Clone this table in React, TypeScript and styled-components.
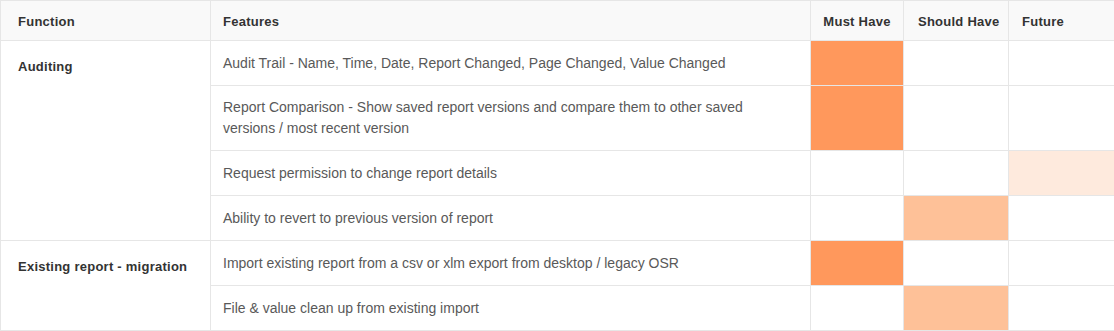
import { FC } from "react"
import styled, { createGlobalStyle } from "styled-components"

type Priority = "must" | "should" | "future"

interface Feature {
  text: string
  priority: Priority
  tall?: boolean
}

interface Group {
  name: string
  features: Feature[]
}

const groups: Group[] = [
  {
    name: "Auditing",
    features: [
      { text: "Audit Trail - Name, Time, Date, Report Changed, Page Changed, Value Changed", priority: "must" },
      {
        text: "Report Comparison - Show saved report versions and compare them to other saved versions / most recent version",
        priority: "must",
        tall: true,
      },
      { text: "Request permission to change report details", priority: "future" },
      { text: "Ability to revert to previous version of report", priority: "should" },
    ],
  },
  {
    name: "Existing report - migration",
    features: [
      { text: "Import existing report from a csv or xlm export from desktop / legacy OSR", priority: "must" },
      { text: "File & value clean up from existing import", priority: "should" },
    ],
  },
]

const priorities: Priority[] = ["must", "should", "future"]

const fills: Record<Priority, string> = {
  must: "#ff985c",
  should: "#fec198",
  future: "#feeadd",
}

const GlobalStyle = createGlobalStyle`
  body {
    margin: 0;
    background: #ffffff;
    font-family: "Liberation Sans", Arial, sans-serif;
  }
`

const Table = styled.table`
  width: 1114px;
  border-collapse: collapse;
  table-layout: fixed;
  font-size: 14px;
  line-height: 21px;
  color: #595959;
`

const HeadCell = styled.th<{ $w: number; $pl: number; $center?: boolean }>`
  width: ${props => props.$w}px;
  height: 40px;
  box-sizing: border-box;
  padding: 1px 0 0 ${props => props.$pl}px;
  text-align: ${props => (props.$center ? "center" : "left")};
  background: #f9f9f9;
  border: 1px solid #e6e6e6;
  font-size: 13px;
  letter-spacing: 0.25px;
  font-weight: 700;
  color: #333333;
`

const Row = styled.tr<{ $tall?: boolean }>`
  height: ${props => (props.$tall ? 65 : 45)}px;
`

const GroupCell = styled.td`
  vertical-align: top;
  padding: 15px 10px 0 17px;
  border: 1px solid #e6e6e6;
  font-size: 13px;
  letter-spacing: 0.25px;
  font-weight: 700;
  color: #333333;
`

const FeatureCell = styled.td`
  padding: 11px 20px 11px 12px;
  border: 1px solid #e6e6e6;
`

const MarkCell = styled.td<{ $fill?: string }>`
  padding: 0;
  border: 1px solid #e6e6e6;
  background: ${props => props.$fill ?? "#ffffff"};
`

const App: FC = () => {
  return (
    <>
      <GlobalStyle />
      <Table>
        <thead>
          <tr>
            <HeadCell $w={210} $pl={17}>Function</HeadCell>
            <HeadCell $w={600} $pl={12}>Features</HeadCell>
            <HeadCell $w={93} $pl={0} $center>Must Have</HeadCell>
            <HeadCell $w={105} $pl={14}>Should Have</HeadCell>
            <HeadCell $w={106} $pl={13}>Future</HeadCell>
          </tr>
        </thead>
        <tbody>
          {groups.map(group =>
            group.features.map((feature, i) => (
              <Row key={feature.text} $tall={feature.tall}>
                {i === 0 && <GroupCell rowSpan={group.features.length}>{group.name}</GroupCell>}
                <FeatureCell>{feature.text}</FeatureCell>
                {priorities.map(p => (
                  <MarkCell key={p} $fill={feature.priority === p ? fills[p] : undefined} />
                ))}
              </Row>
            ))
          )}
        </tbody>
      </Table>
    </>
  )
}

export default App
